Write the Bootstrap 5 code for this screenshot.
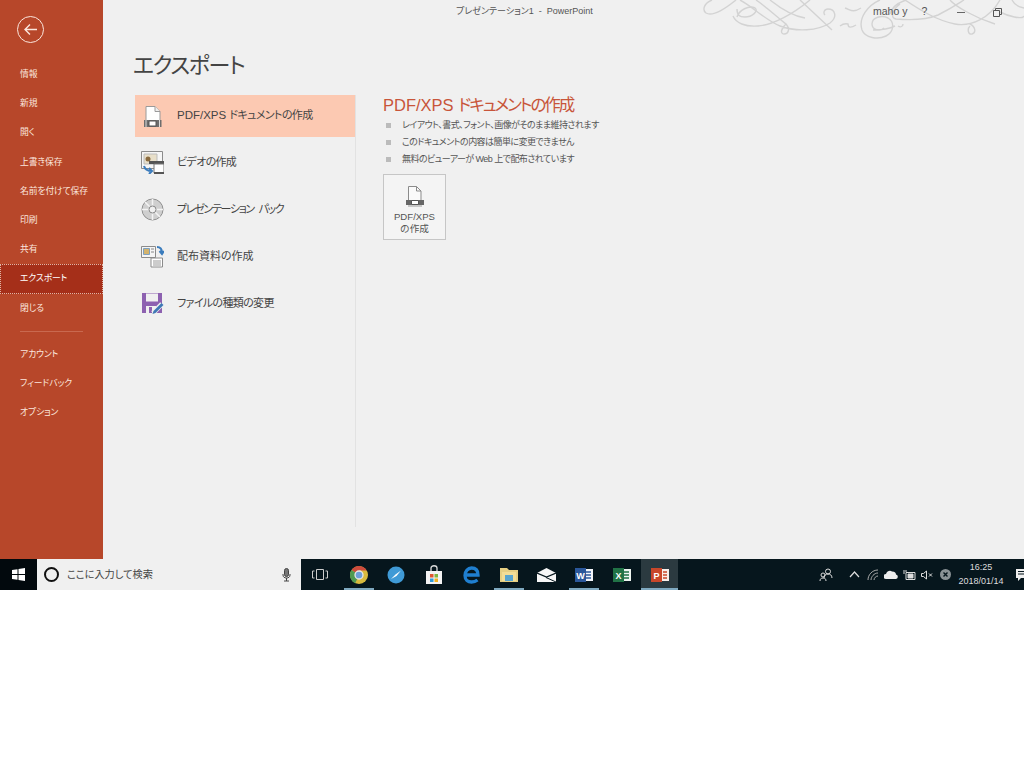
<!DOCTYPE html>
<html lang="ja">
<head>
<meta charset="UTF-8">
<title>エクスポート - PowerPoint</title>
<link href="https://cdn.jsdelivr.net/npm/bootstrap@5.3.0/dist/css/bootstrap.min.css" rel="stylesheet">
<style>
body { background: #fff; font-family: "Liberation Sans", "Noto Sans CJK JP", sans-serif; font-feature-settings: "palt"; color: #444; overflow: hidden; }
.app-window { height: 559px; background: #f0f0f0; }
.backstage { width: 103px; background: #b7472a; color: #fbe6dd; font-size: 8.8px; letter-spacing: -.1px; }
.back-btn { width: 27px; height: 27px; margin: 16px 0 0 17px; border: 1.5px solid #fbe6dd; border-radius: 50%; }
.side-list { margin-top: 17px; }
.side-item { height: 29.2px; padding-left: 20px; line-height: 29px; }
.side-item.current { background: #a52f19; outline: 1px dotted #e0b5a5; outline-offset: -1px; color: #fff; }
.side-rule { width: 63px; height: 1px; margin: 8px 0 8px 20px; background: #c9694f; }
.main-pane { min-width: 0; position: relative; z-index: 1; }
.title-bar { height: 24px; font-size: 9px; color: #555; }
.doc-title { margin-left: 353px; width: 134px; white-space: nowrap; }
.user-name { margin-left: 283px; font-size: 10.5px; }
.help-mark { margin-left: 14px; font-size: 10.5px; }
.min-mark { width: 8px; height: 1px; background: #666; margin-left: 30px; }
.restore-mark { margin-left: 28px; }
.ornament { position: absolute; top: 0; right: 0; }
.page-head { margin: 0 0 0 30px; height: 71px; padding-top: 24px; font-size: 22px; line-height: 36px; font-weight: 400; letter-spacing: -1.4px; color: #444; }
.export-body { padding-left: 32px; }
.export-menu { width: 221px; height: 432px; border-right: 1px solid #e2e2e2; font-size: 11px; color: #444; }
.export-row { height: 47px; padding-left: 6px; gap: 13px; white-space: nowrap; }
.export-row:first-child { height: 42px; background: #fcc9b2; margin-bottom: 2px; padding-left: 8px; gap: 11px; }
.export-icon { width: 23px; height: 23px; flex: none; }
.latin-part { font-size: 11.5px; }
.kana-fit { letter-spacing: -.6px; }
.kana-tight { letter-spacing: -.65px; }
.kana-tighter { letter-spacing: -1.35px; word-spacing: 3px; }
.detail-pane { padding-left: 27px; padding-top: 0; }
.detail-title { font-size: 16.5px; line-height: 20px; color: #c8553a; margin: 0; font-weight: 400; white-space: nowrap; }
.detail-title span { letter-spacing: -2px; }
.bullet-list { margin: 2px 0 6px; padding: 0; list-style: none; font-size: 9px; letter-spacing: -.55px; color: #555; }
.bullet-list li { height: 17px; line-height: 17px; padding-left: 19px; position: relative; white-space: nowrap; }
.bullet-list li::before { content: ""; position: absolute; left: 3px; top: 6px; width: 5px; height: 5px; background: #bbb; }
.make-btn { width: 63px; height: 66px; padding: 5px 0 0; background: #f4f4f4; border: 1px solid #c6c6c6; border-radius: 0; font-size: 9.6px; line-height: 12px; color: #555; }
.make-btn svg { display: block; margin: 0 auto 2px; }
.taskbar { height: 31px; background: #06161d; color: #ddd; }
.start-btn { width: 37px; background: #02090d; }
.search-box { width: 264px; background: #f0f0f0; color: #444; font-size: 10.2px; padding: 0 10px 0 7px; }
.search-ring { width: 15px; height: 15px; border: 2.5px solid #111; border-radius: 50%; margin-right: 8px; }
.task-btn { width: 37.6px; height: 31px; flex: none; }
.task-btn.running { background: linear-gradient(#7fa9c0, #7fa9c0) bottom / 30px 2px no-repeat; }
.task-btn.active { background: linear-gradient(#7fa9c0, #7fa9c0) bottom / 100% 2px no-repeat, #2b3a40; }
.view-btn { width: 37px; margin-right: 2px; }
.tray { margin-left: auto; font-size: 9px; color: #ddd; }
.tray-icon { width: 18px; }
.tray-people { margin-right: 10px; }
.tray-chevron { margin-right: 1px; }
.clock { width: 54px; text-align: center; line-height: 13.5px; }
.note-icon { width: 16px; padding-left: 8px; overflow: hidden; }
</style>
</head>
<body>
<div class="app-window d-flex position-relative">
  <nav class="backstage flex-shrink-0">
    <div class="back-btn d-flex align-items-center justify-content-center">
      <svg width="15" height="13" viewBox="0 0 15 13" fill="none" stroke="#fbe6dd" stroke-width="1.4"><path d="M14 6.5H2M7 1.5 2 6.5l5 5"/></svg>
    </div>
    <div class="side-list">
      <div class="side-item">情報</div>
      <div class="side-item">新規</div>
      <div class="side-item">開く</div>
      <div class="side-item">上書き保存</div>
      <div class="side-item">名前を付けて保存</div>
      <div class="side-item">印刷</div>
      <div class="side-item">共有</div>
      <div class="side-item current">エクスポート</div>
      <div class="side-item">閉じる</div>
      <div class="side-rule"></div>
      <div class="side-item">アカウント</div>
      <div class="side-item">フィードバック</div>
      <div class="side-item">オプション</div>
    </div>
  </nav>
  <main class="main-pane flex-grow-1">
    <div class="title-bar d-flex align-items-center">
      <div class="doc-title">プレゼンテーション1 &nbsp;-&nbsp; PowerPoint</div>
      <div class="user-name">maho y</div>
      <div class="help-mark">?</div>
      <div class="min-mark"></div>
      <svg class="restore-mark" width="9" height="9" viewBox="0 0 9 9" fill="none" stroke="#555"><path d="M.5 2.5h6v6h-6zM2.500 2.500v-2h6v6h-2"/></svg>
    </div>
    <h1 class="page-head">エクスポート</h1>
    <div class="export-body d-flex">
      <div class="export-menu flex-shrink-0">
        <div class="export-row d-flex align-items-center">
          <svg class="export-icon" viewBox="0 0 23 23"><path d="M3 1.500h9l5 5v12H3z" fill="#fff" stroke="#9a9a9a"/><path d="M12 1.500v5h5" fill="#eee" stroke="#9a9a9a"/><path d="M1 15h17.500v7H1z" fill="#6d6d6d"/><path d="M6 16h7v5H6z" fill="#fff" stroke="#555"/><path d="M3 15v7M16.500 15v7" stroke="#ddd"/></svg>
          <span><span class="latin-part">PDF/XPS</span> <span class="kana-fit">ドキュメントの作成</span></span>
        </div>
        <div class="export-row d-flex align-items-center">
          <svg class="export-icon" viewBox="0 0 23 23"><path d="M.5.5h21v17H.5z" fill="#f6f6f6" stroke="#8b8b8b"/><path d="M3 3h13v10H3z" fill="#e8dfc9" stroke="#bbb"/><circle cx="7" cy="8" r="2.500" fill="#8a6b3f"/><path d="M8 10h15v3H8z" fill="#555"/><path d="M13 13h10v9H13z" fill="#fff" stroke="#777"/><path d="M13 21h10v2H13z" fill="#555"/><path d="M3 15c1 4 4 5 8 5M8 17l3 3-3 3" fill="none" stroke="#3b7cbd" stroke-width="2"/></svg>
          <span class="kana-tight">ビデオの作成</span>
        </div>
        <div class="export-row d-flex align-items-center">
          <svg class="export-icon" viewBox="0 0 23 23"><circle cx="11.500" cy="11.500" r="10.500" fill="#cfcfcf" stroke="#8f8f8f"/><path d="M11.500 1v7M11.500 15v7M1 11.500h7M15 11.500h7M4 4l5 5M14 14l5 5" stroke="#f3f3f3" stroke-width="1.500"/><circle cx="11.500" cy="11.500" r="3.500" fill="#f0f0f0" stroke="#888"/></svg>
          <span class="kana-tighter">プレゼンテーション パック</span>
        </div>
        <div class="export-row d-flex align-items-center">
          <svg class="export-icon" viewBox="0 0 23 23"><path d="M.5 1.500h14v11H.5z" fill="#f5f5f5" stroke="#8b8b8b"/><path d="M2.500 3.500h6v6h-6z" fill="#d3b36d" stroke="#7da0c0"/><path d="M10 4h3M10 7h3" stroke="#888"/><path d="M10 13h11.500v9H10z" fill="#fff" stroke="#8b8b8b"/><path d="M12 16h8M12 18h8M12 20h8" stroke="#999"/><path d="M16 2c3 0 5 2 5 6M18.500 6l2.500 3 2-3" fill="none" stroke="#3b7cbd" stroke-width="2"/></svg>
          <span>配布資料の作成</span>
        </div>
        <div class="export-row d-flex align-items-center">
          <svg class="export-icon" viewBox="0 0 23 23"><path d="M1 1h20v20H1z" fill="#8d61b0"/><path d="M5 1.500h12v8H5z" fill="#f0f0f0"/><path d="M5 14h10v7H5z" fill="#f0f0f0"/><path d="M8 15h3v6H8z" fill="#8d61b0"/><path d="M12 21 21 12" stroke="#f0f0f0" stroke-width="5"/><path d="M11.500 22l1-3 8-8 2 2-8 8z" fill="#3f78b5"/></svg>
          <span class="kana-tight">ファイルの種類の変更</span>
        </div>
      </div>
      <section class="detail-pane flex-grow-1">
        <h2 class="detail-title">PDF/XPS <span>ドキュメントの作成</span></h2>
        <ul class="bullet-list">
          <li>レイアウト、書式、フォント、画像がそのまま維持されます</li>
          <li>このドキュメントの内容は簡単に変更できません</li>
          <li>無料のビューアーが Web 上で配布されています</li>
        </ul>
        <button type="button" class="btn make-btn d-block">
          <svg width="20" height="24" viewBox="0 0 20 24"><path d="M3.500 1.500h8l4.500 4.500v11H3.500z" fill="#fafafa" stroke="#8b8b8b"/><path d="M11.500 1.500V6H16" fill="none" stroke="#8b8b8b"/><path d="M1 15h18v5H1z" fill="#666"/><path d="M6.500 15.500h7v4h-7z" fill="#fff" stroke="#555"/><path d="M3 21h14" stroke="#999"/></svg>
          PDF/XPS<br>の作成
        </button>
      </section>
    </div>
  </main>
  <svg class="ornament" width="322" height="42" viewBox="702 0 322 42" fill="none" stroke="#d3d3d3" stroke-width="1.400">
    <path d="M712 0c-8 3-10 10-6 13 5 3 14 0 30-13M737 17c2-7 12-12 18-9 4 3-3 9-10 9-6 0-8-2-8-8M733 16c3 7 12 11 25 10 15-1 35-12 52-26"/>
    <path d="M740 0c12 6 25 20 40 26 16 6 38 5 50-3 8-6 5-14-2-14-4 0-5 4-3 6M756 0c12 8 22 18 30 24-5 4-6 10-2 10 5 0 6-6 2-10M770 0c10 8 22 16 35 18M800 0l32 30"/>
    <path d="M840 26c4-3 8-2 8-2 0 4 3 4 8 1M880 0c-12 5-22 18-18 30 3 8 16 10 24 6 8-4 9-14 2-18-6-3-16-1-16 6 0 6 8 8 12 4M845 8c6 2 8 5 16 0M873 30c10 0 16-1 22-4M898 26c3 2 5 0 5-2"/>
    <path d="M890 14c2-8 10-12 16-14M900 4c-8 6-10 14-4 15 12 1 30 1 42-4 12-6 18-10 26-15M905 0c12 8 30 20 50 24 16 3 35-6 45-24M950 0c5 6 25 18 45 24M970 24c6 3 6 9 2 10-4 1-5-5-2-8M1000 12c8 4 22 8 24 4M1024 8c-6-1-10-4-12-8"/>
  </svg>
</div>
<footer class="taskbar d-flex align-items-stretch">
  <div class="start-btn d-flex align-items-center justify-content-center">
    <svg width="13" height="13" viewBox="0 0 13 13" fill="#fff"><path d="M0 2 5.500 1.200V6H0zM6.500 1 13 0v6H6.500zM0 7h5.500v4.800L0 11zM6.500 7H13v6l-6.500-1z"/></svg>
  </div>
  <div class="search-box d-flex align-items-center">
    <span class="search-ring"></span>
    <span>ここに入力して検索</span>
    <svg class="ms-auto" width="9" height="14" viewBox="0 0 9 14" fill="none" stroke="#444"><rect x="2.500" y=".5" width="4" height="8" rx="2" fill="#777"/><path d="M1 6v1c0 2 1.500 3 3.500 3S8 9 8 7V6M4.500 10v3M2 13h5"/></svg>
  </div>
  <div class="task-btn view-btn d-flex align-items-center justify-content-center">
    <svg width="16" height="11" viewBox="0 0 16 11" fill="none" stroke="#ccc"><path d="M4.500.5h7v10h-7zM2.500 2H.5v7h2M13.500 2h2v7h-2"/></svg>
  </div>
  <div class="task-btn running d-flex align-items-center justify-content-center">
    <svg width="18" height="18" viewBox="0 0 18 18"><circle cx="9" cy="9" r="9" fill="#d9bb3f"/><path d="M9 9 1.500 4A9 9 0 0 1 16.800 4.500H9z" fill="#cd4b3c"/><path d="M9 9 5.200 17.200A9 9 0 0 1 1.500 4z" fill="#4f9a52"/><circle cx="9" cy="9" r="4" fill="#6d9fd8" stroke="#e8e8e8" stroke-width="1.300"/></svg>
  </div>
  <div class="task-btn d-flex align-items-center justify-content-center">
    <svg width="18" height="18" viewBox="0 0 18 18"><circle cx="9" cy="9" r="8.500" fill="#3f9ad6"/><path d="M4 13 8.500 8.500 14 4.500 9.500 10z" fill="#fff"/></svg>
  </div>
  <div class="task-btn d-flex align-items-center justify-content-center">
    <svg width="18" height="20" viewBox="0 0 18 20"><path d="M1 6h16v13H1z" fill="#f3f3f3"/><path d="M6 6V3c0-3 6-3 6 0v3" fill="none" stroke="#ddd" stroke-width="1.300"/><path d="M5 9h3.500v3.500H5z" fill="#e0552f"/><path d="M9.500 9H13v3.500H9.500z" fill="#7fb53d"/><path d="M5 13.500h3.500V17H5z" fill="#2f9ad8"/><path d="M9.500 13.500H13V17H9.500z" fill="#f2b01e"/></svg>
  </div>
  <div class="task-btn d-flex align-items-center justify-content-center">
    <svg width="17" height="18" viewBox="0 0 17 18" fill="none" stroke="#1f7fd0" stroke-width="3.300"><path d="M2 9h13C15 4 12 2 8.500 2S2 5 2 9.500 5 16 8.500 16c2.500 0 4.500-.8 6-2"/></svg>
  </div>
  <div class="task-btn running d-flex align-items-center justify-content-center">
    <svg width="18" height="15" viewBox="0 0 18 15"><path d="M0 1h7l2 2h9v12H0z" fill="#e6cf83"/><path d="M2 5h14v9H2z" fill="#f2dd96"/><path d="M5 8h8v6H5z" fill="#58a5cf"/></svg>
  </div>
  <div class="task-btn d-flex align-items-center justify-content-center">
    <svg width="19" height="14" viewBox="0 0 19 14"><path d="M0 5 9.500 0 19 5v9H0z" fill="#f7f7f7"/><path d="M0 5l9.500 4L19 5" fill="none" stroke="#06161d" stroke-width="1.300"/><path d="M9 9.500 19 14" stroke="#06161d"/></svg>
  </div>
  <div class="task-btn running d-flex align-items-center justify-content-center">
    <svg width="18" height="16" viewBox="0 0 18 16"><path d="M7 2h11v12H7z" fill="#f2f5fa"/><path d="M10 5h6M10 8h6M10 11h6" stroke="#2b579a" stroke-width="1.300"/><path d="M0 1h11v14H0z" fill="#2b579a"/><text x="5.500" y="11.500" text-anchor="middle" font-size="9" font-weight="700" fill="#fff" font-family="Liberation Sans">W</text></svg>
  </div>
  <div class="task-btn d-flex align-items-center justify-content-center">
    <svg width="18" height="16" viewBox="0 0 18 16"><path d="M7 2h11v12H7z" fill="#eef5f0"/><path d="M11 5h5M11 8h5M11 11h5" stroke="#217346" stroke-width="1.300"/><path d="M0 1h11v14H0z" fill="#217346"/><text x="5.500" y="11.500" text-anchor="middle" font-size="9" font-weight="700" fill="#fff" font-family="Liberation Sans">X</text></svg>
  </div>
  <div class="task-btn active d-flex align-items-center justify-content-center">
    <svg width="18" height="16" viewBox="0 0 18 16"><path d="M7 2h11v12H7z" fill="#f7eeea"/><path d="M12 5h4M12 8h4M12 11h4" stroke="#c8472a" stroke-width="1.300"/><path d="M0 1h11v14H0z" fill="#c8472a"/><text x="5.500" y="11.500" text-anchor="middle" font-size="9" font-weight="700" fill="#fff" font-family="Liberation Sans">P</text></svg>
  </div>
  <div class="tray d-flex align-items-center">
    <div class="tray-icon tray-people d-flex justify-content-center"><svg width="14" height="14" viewBox="0 0 14 14" fill="none" stroke="#ddd"><circle cx="9" cy="3.500" r="2.500"/><path d="M5 10c0-3 2-4 4-4s4 1 4 4"/><circle cx="4" cy="7" r="2"/><path d="M1 13c0-2 1-3 3-3s3 1 3 3"/></svg></div>
    <div class="tray-icon tray-chevron d-flex justify-content-center"><svg width="11" height="7" viewBox="0 0 11 7" fill="none" stroke="#ddd" stroke-width="1.200"><path d="M1 6 5.500 1 10 6"/></svg></div>
    <div class="tray-icon d-flex justify-content-center"><svg width="12" height="12" viewBox="0 0 12 12" fill="none" stroke="#aaa"><path d="M1 11C1 6 5 1 11 1M4 11c0-3 3-7 7-7M7 11c0-2 2-4 4-4"/></svg></div>
    <div class="tray-icon d-flex justify-content-center"><svg width="14" height="9" viewBox="0 0 14 9" fill="#eee"><path d="M2 9a2.500 2.500 0 0 1 0-5C3 1 6 0 8 1.500 11 1.500 12 3 12 4.500A2.300 2.300 0 0 1 12 9z"/></svg></div>
    <div class="tray-icon d-flex justify-content-center"><svg width="13" height="10" viewBox="0 0 13 10" fill="none" stroke="#ddd"><path d="M3 2.500h9v7H3z"/><path d="M5 4h5v4H5z" fill="#ddd"/><path d="M1 0v4M3 0v2"/></svg></div>
    <div class="tray-icon d-flex justify-content-center"><svg width="12" height="10" viewBox="0 0 12 10" fill="none" stroke="#ddd"><path d="M.5 3.500h2L5.500 1v8L2.500 6.500h-2zM8 3.500l3 3M11 3.500l-3 3"/></svg></div>
    <div class="tray-icon d-flex justify-content-center"><svg width="11" height="11" viewBox="0 0 11 11"><circle cx="5.500" cy="5.500" r="5.500" fill="#8a9296"/><path d="M3.500 3.500l4 4M7.500 3.500l-4 4" stroke="#06161d" stroke-width="1.400"/></svg></div>
    <div class="clock">16:25<br>2018/01/14</div>
    <div class="note-icon d-flex"><svg width="14" height="14" viewBox="0 0 14 14" fill="#eee" class="flex-shrink-0"><path d="M0 1h14v9H5l-3 3v-3H0z"/><path d="M2 3.500h10M2 6h10" stroke="#06161d"/></svg></div>
  </div>
</footer>
</body>
</html>
